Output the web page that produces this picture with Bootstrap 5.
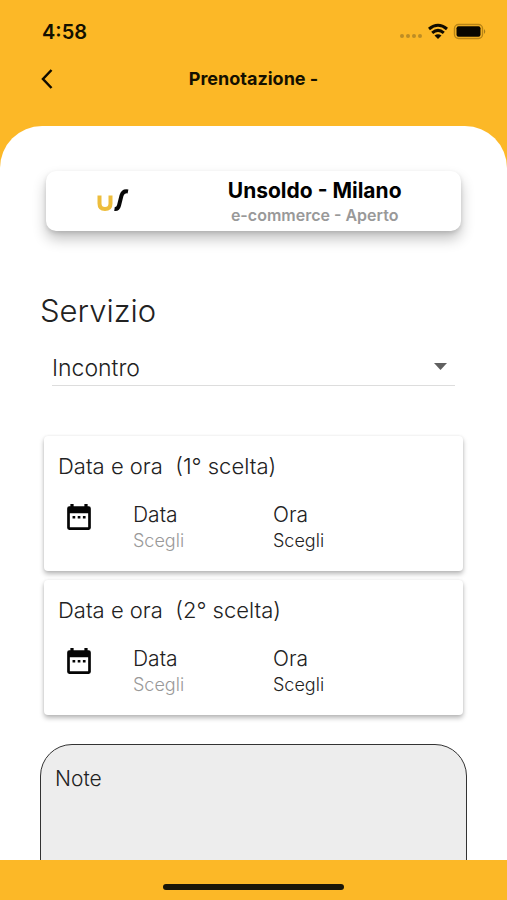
<!DOCTYPE html>
<html lang="it">
<head>
<meta charset="utf-8">
<meta name="viewport" content="width=device-width, initial-scale=1">
<title>Prenotazione</title>
<link href="https://cdn.jsdelivr.net/npm/bootstrap@5.3.0/dist/css/bootstrap.min.css" rel="stylesheet">
<style>
body { font-family: Inter, "Open Sans", sans-serif; background: #fcb827; color: #222; }
.status { padding: 20px 20px 0 42px; height: 42px; }
.clock { font-size: 20px; line-height: 24px; font-weight: 600; color: #141000; }
.topbar { height: 84px; padding: 24px 32px 0; }
.topbar h1 { font-size: 18px; line-height: 26px; font-weight: 700; color: #141000; }
.side { width: 30px; height: 26px; }
.sheet { border-radius: 42px 42px 0 0; padding: 45px 40px 0; overflow-y: auto; scrollbar-width: none; min-height: 0; }
.sheet::-webkit-scrollbar { display: none; }
.shop { margin: 0 6px; min-height: 60px; border-radius: 10px; box-shadow: 0 8px 14px rgba(0,0,0,.24), 0 2px 4px rgba(0,0,0,.12); }
.shop-logo { padding-right: 4px; }
.shop-text { padding: 4px 16px 0 0; }
.shop-name { font-size: 21px; line-height: 24px; font-weight: 700; color: #000; }
.shop-kind { font-size: 16px; line-height: 24px; font-weight: 600; color: #999; }
.section-title { font-size: 31px; line-height: 36px; font-weight: 300; margin: 62px 0 21px; }
.service { margin: 0 12px; }
.service select { font-size: 23px; line-height: 24px; font-weight: 300; height: 36px; color: #222; background-image: none; border: 0; border-bottom: 1px solid #ddd; border-radius: 0; padding: 0; }
.service svg { position: absolute; right: 8px; top: 13px; pointer-events: none; }
.slots { margin: 50px 4px 29px; gap: 9px; }
.slot { border-radius: 4px; padding: 18px 14px 17px; box-shadow: 0 3px 5px rgba(0,0,0,.28), 0 0 3px rgba(0,0,0,.07); }
.slot h3 { font-size: 22px; line-height: 24px; font-weight: 300; margin: 0 0 24px; white-space: pre-wrap; }
.cal { width: 75px; padding: 0 0 22px 8px; }
.choices { padding-right: 36px; }
.slot label { font-size: 21px; line-height: 26px; font-weight: 300; }
.slot button { font-size: 18px; line-height: 26px; font-weight: 300; color: #222; }
.slot button.pending { color: #999; }
.notes { font-size: 21px; line-height: 24px; font-weight: 300; height: 200px; padding: 22px 14px; border: 1px solid #333; border-radius: 32px; background: #ededed; resize: none; }
.notes::placeholder { color: #222; opacity: 1; }
.home { height: 40px; padding-top: 14px; background: #fcb827; }
.home span { width: 181px; height: 6px; background: #1a1608; }
</style>
<script src="https://cdn.jsdelivr.net/npm/bootstrap@5.3.0/dist/js/bootstrap.bundle.min.js"></script>
</head>
<body class="vh-100 d-flex flex-column overflow-hidden">
<svg class="d-none" aria-hidden="true">
  <symbol id="calendar" viewBox="0 0 24 26">
    <path fill="#050505" fill-rule="evenodd" d="M4 1h3v2h10V1h3v2h1q2 0 2 2v18q0 2-2 2H3q-2 0-2-2V5q0-2 2-2h1zM3.500 9.500v13h17v-13z"/>
    <path fill="#050505" d="M6 12h2.500v2.500H6zM10.800 12h2.500v2.500h-2.500zM15.600 12h2.500v2.500h-2.500z"/>
  </symbol>
</svg>
<div class="status d-flex justify-content-between flex-shrink-0">
  <span class="clock">4:58</span>
  <svg width="88" height="24" viewBox="0 0 88 24" aria-hidden="true">
    <g fill="#bd8d24"><circle cx="3" cy="16" r="2"/><circle cx="9" cy="16" r="2"/><circle cx="15" cy="16" r="2"/><circle cx="21" cy="16" r="2"/></g>
    <g fill="none" stroke="#100c00" stroke-width="3"><path d="M30 9q9-7.600 18 0M33.200 12.900q5.800-5 11.600 0"/></g>
    <path fill="#100c00" d="M35.500 15.500q3.500-2.600 7 0L39 19z"/>
    <rect x="55.500" y="4.500" width="28" height="14" rx="4" fill="none" stroke="#b98515" stroke-width="1.400"/>
    <rect x="57.500" y="6.300" width="24" height="10.400" rx="2" fill="#080600"/>
    <path d="M85 9q2.500 2.500 0 5z" fill="#a67a1a"/>
  </svg>
</div>
<header class="topbar d-flex justify-content-between flex-shrink-0">
  <button class="side btn p-0 border-0 d-flex align-items-center justify-content-center" type="button" aria-label="Indietro">
    <svg width="14" height="22" viewBox="0 0 14 22"><path d="M11.500 2L3 11l8.500 9" fill="none" stroke="#100c00" stroke-width="2.500"/></svg>
  </button>
  <h1 class="m-0">Prenotazione -</h1>
  <span class="side"></span>
</header>
<main class="sheet bg-white flex-grow-1">
  <div class="shop bg-white d-flex align-items-center">
    <div class="shop-logo col-4 d-flex justify-content-center">
      <svg width="32" height="24" viewBox="0 0 32 24" role="img" aria-label="Unsoldo">
        <path d="M2.500 6.500v8q0 5.500 5.500 5.500t5.500-5.500v-8" fill="none" stroke="#edbd3c" stroke-width="4"/>
        <path d="M31 2.500q-5-1-6.500 4l-2.500 10q-1 4-4.500 3.500" fill="none" stroke="#080808" stroke-width="4"/>
      </svg>
    </div>
    <div class="shop-text col-8 text-center">
      <div class="shop-name">Unsoldo - Milano</div>
      <div class="shop-kind">e-commerce - Aperto</div>
    </div>
  </div>
  <h2 class="section-title"><label for="service">Servizio</label></h2>
  <div class="service position-relative">
    <select id="service" class="form-select shadow-none"><option>Incontro</option></select>
    <svg width="13" height="7" viewBox="0 0 13 7" aria-hidden="true"><path d="M0 0h13L6.500 7z" fill="#606060"/></svg>
  </div>
  <div class="slots d-flex flex-column">
    <section class="slot bg-white">
      <h3>Data e ora  (1° scelta)</h3>
      <div class="d-flex align-items-center">
        <div class="cal"><svg width="26" height="28"><use href="#calendar"/></svg></div>
        <div class="choices row g-0 flex-grow-1">
          <div class="col-6 d-flex flex-column align-items-start"><label for="date1">Data</label><button id="date1" type="button" class="pending btn p-0 border-0">Scegli</button></div>
          <div class="col-6 d-flex flex-column align-items-start"><label for="time1">Ora</label><button id="time1" type="button" class="btn p-0 border-0">Scegli</button></div>
        </div>
      </div>
    </section>
    <section class="slot bg-white">
      <h3>Data e ora  (2° scelta)</h3>
      <div class="d-flex align-items-center">
        <div class="cal"><svg width="26" height="28"><use href="#calendar"/></svg></div>
        <div class="choices row g-0 flex-grow-1">
          <div class="col-6 d-flex flex-column align-items-start"><label for="date2">Data</label><button id="date2" type="button" class="pending btn p-0 border-0">Scegli</button></div>
          <div class="col-6 d-flex flex-column align-items-start"><label for="time2">Ora</label><button id="time2" type="button" class="btn p-0 border-0">Scegli</button></div>
        </div>
      </div>
    </section>
  </div>
  <textarea class="notes form-control shadow-none" aria-label="Note" placeholder="Note"></textarea>
</main>
<footer class="home d-flex justify-content-center align-items-center pb-0 flex-shrink-0"><span class="rounded-pill"></span></footer>
</body>
</html>
